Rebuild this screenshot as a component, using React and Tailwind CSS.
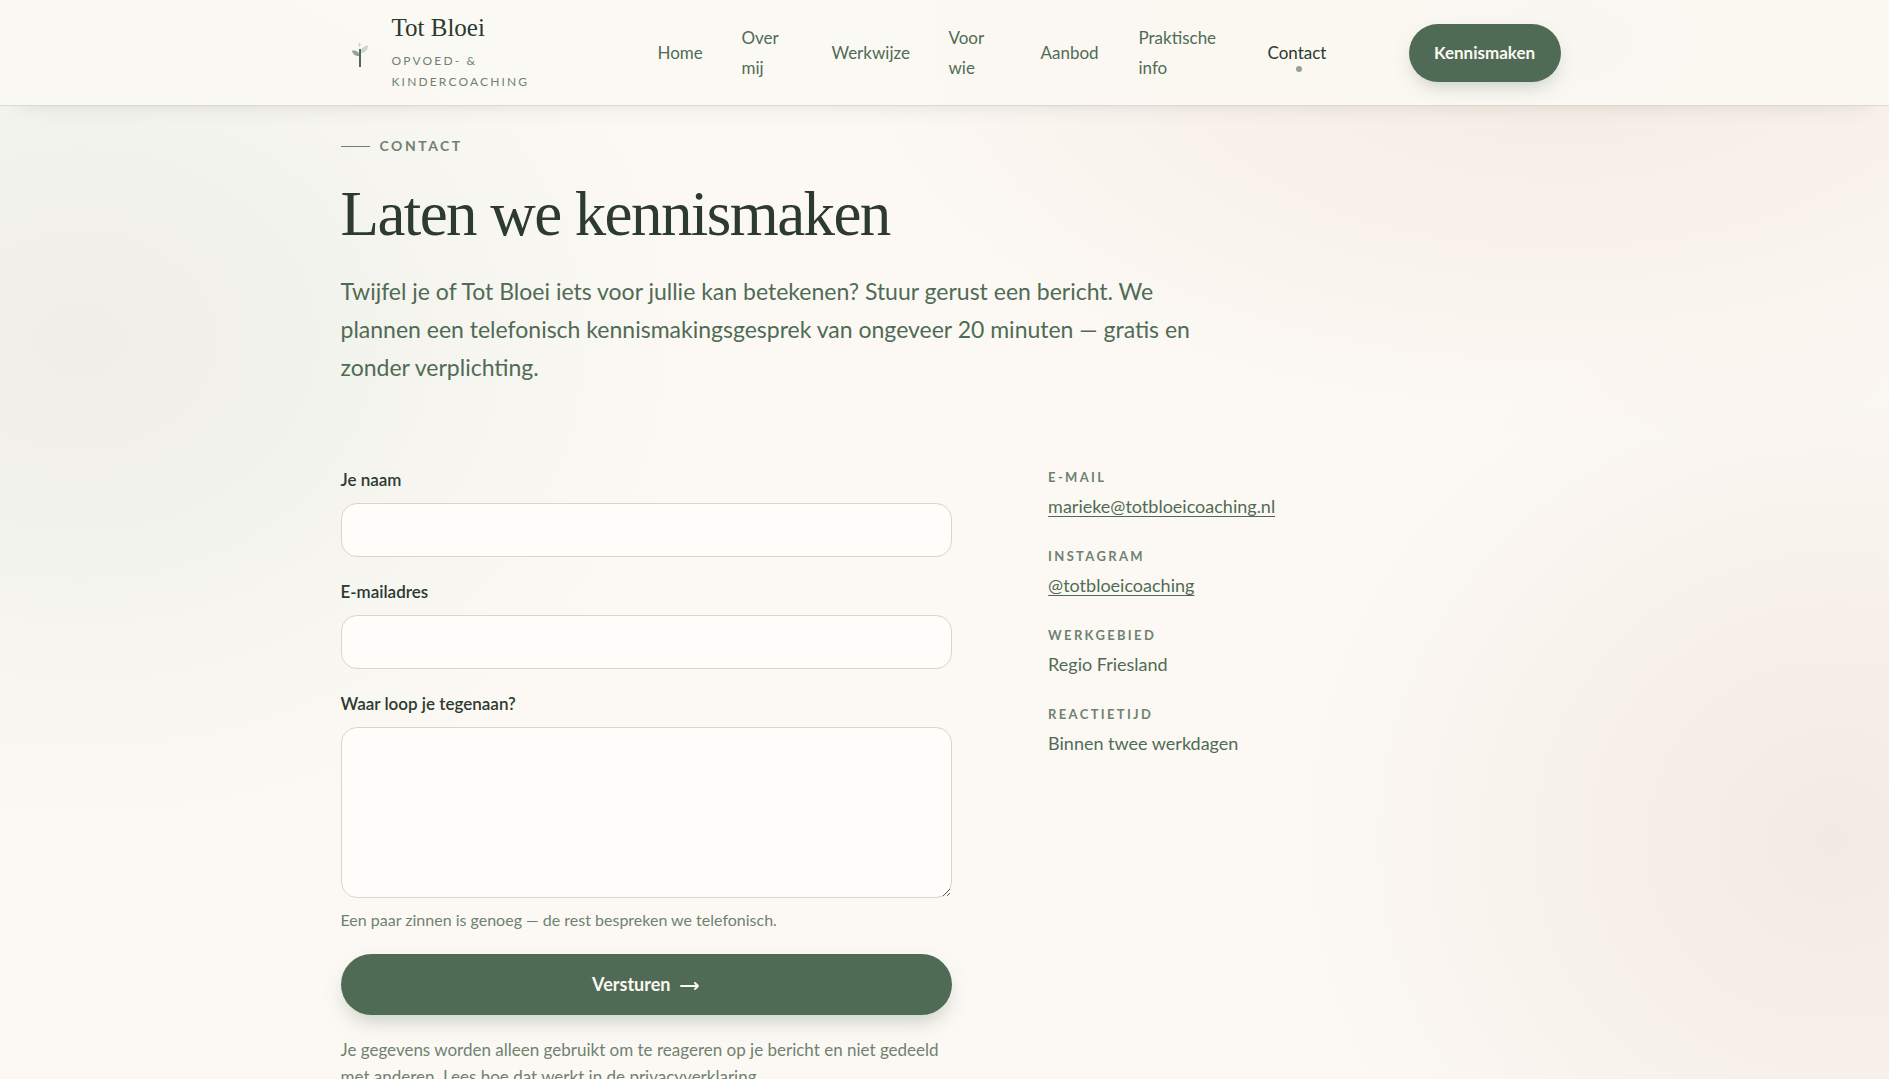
import React, { useState } from 'react';

const navItems = [
  { label: 'Home', href: '#home', width: 'w-[46px]' },
  { label: 'Over mij', href: '#over-mij', width: 'w-[52px]' },
  { label: 'Werkwijze', href: '#werkwijze', width: 'w-[79px]' },
  { label: 'Voor wie', href: '#voor-wie', width: 'w-[54px]' },
  { label: 'Aanbod', href: '#aanbod', width: 'w-[60px]' },
  { label: 'Praktische info', href: '#praktische-info', width: 'w-[91px]' },
  { label: 'Contact', href: '#contact', width: 'w-[62px]', active: true },
];

const details = [
  { label: 'E-mail', value: 'marieke@totbloeicoaching.nl', href: 'mailto:marieke@totbloeicoaching.nl' },
  { label: 'Instagram', value: '@totbloeicoaching', href: '#instagram' },
  { label: 'Werkgebied', value: 'Regio Friesland' },
  { label: 'Reactietijd', value: 'Binnen twee werkdagen' },
];

const fieldClass =
  'block w-full rounded-2xl border border-[#d5d6cd] bg-[#fefdf9] px-4 text-[17px] text-[#506b55] outline-none focus:border-[#506b55]';

const Sprout = () => (
  <svg viewBox="0 0 20 28" className="mt-1 h-7 w-5 shrink-0" fill="none" aria-hidden="true">
    <path d="M10 8v18" stroke="#506b55" strokeWidth="2" />
    <path d="M10 15C6 15.500 2.500 13.500 2 9.500c4-.5 7.500 1.500 8 5.500z" fill="#506b55" fillOpacity=".6" />
    <path d="M10.500 12C10.500 7.500 13.500 5 18 4.500c0 4.500-3 7.500-7.500 7.500z" fill="#506b55" fillOpacity=".25" />
    <path d="M9.500 6c-1.500-1.500-1.500-3 0-4.500 1.500 1.500 1.500 3 0 4.500z" fill="#506b55" fillOpacity=".25" />
  </svg>
);

const Header = () => (
  <header className="border-b border-[#dcdad0] bg-[#fbf8f3]/90 shadow-[0_12px_24px_-20px_rgba(80,107,85,0.35)]">
    <div className="mx-auto flex h-[105px] max-w-[1280px] items-center px-6">
      <a href="#home" className="flex w-[220px] items-center gap-[22px] pl-[21px]">
        <Sprout />
        <span className="flex flex-col pb-[3px]">
          <span className="font-['Liberation_Serif',serif] text-[25px] leading-9 text-[#2c3a30]">Tot Bloei</span>
          <span className="mt-1 text-[12px] leading-[21px] tracking-[0.18em] text-[#6f8271] uppercase">
            Opvoed- &amp; Kindercoaching
          </span>
        </span>
      </a>

      <nav className="ml-auto flex items-center gap-[38px] text-[17px] leading-[30px]">
        {navItems.map((item) => (
          <a
            key={item.label}
            href={item.href}
            className={`relative ${item.width} ${item.active ? 'text-[#2c3a30]' : 'text-[#506b55]'}`}
          >
            {item.label}
            {item.active && (
              <span className="absolute -bottom-1 left-1/2 size-1.5 -translate-x-1/2 rounded-full bg-[#93a295]" />
            )}
          </a>
        ))}
      </nav>

      <a
        href="#contact"
        className="ml-[79px] flex h-[58px] w-[152px] items-center justify-center rounded-full bg-[#506b55] text-[17px] font-bold text-[#fbf8f3] shadow-[0_8px_20px_-6px_rgba(80,107,85,0.35)]"
      >
        Kennismaken
      </a>
    </div>
  </header>
);

const Field = ({ id, label, children }) => (
  <div className="flex flex-col">
    <label htmlFor={id} className="mb-[9px] text-[17px] leading-7 font-semibold text-[#2c3a30]">
      {label}
    </label>
    {children}
  </div>
);

const ContactForm = () => {
  const [form, setForm] = useState({ name: '', email: '', message: '' });

  const handleChange = (e) => setForm({ ...form, [e.target.name]: e.target.value });

  return (
    <form onSubmit={(e) => e.preventDefault()} className="flex flex-col">
      <div className="flex flex-col gap-[21px]">
        <Field id="name" label="Je naam">
          <input id="name" name="name" type="text" value={form.name} onChange={handleChange} className={`${fieldClass} h-[54px]`} />
        </Field>
        <Field id="email" label="E-mailadres">
          <input id="email" name="email" type="email" value={form.email} onChange={handleChange} className={`${fieldClass} h-[54px]`} />
        </Field>
        <Field id="message" label="Waar loop je tegenaan?">
          <textarea
            id="message"
            name="message"
            value={form.message}
            onChange={handleChange}
            className={`${fieldClass} h-[171px] resize-y py-3`}
          />
        </Field>
      </div>
      <p className="mt-2 text-[16px] leading-[27px] text-[#6f8271]">
        Een paar zinnen is genoeg — de rest bespreken we telefonisch.
      </p>
      <button
        type="submit"
        className="mt-[21px] flex h-[61px] items-center justify-center gap-2.5 rounded-full bg-[#506b55] text-[18px] font-bold text-[#fbf8f3] shadow-[0_10px_22px_-6px_rgba(80,107,85,0.35)]"
      >
        Versturen
        <svg viewBox="0 0 20 12" className="h-3 w-5" fill="none" stroke="currentColor" strokeWidth="2" strokeLinecap="round" strokeLinejoin="round" aria-hidden="true">
          <path d="M1 7h17M15 4l3 3-3 3" />
        </svg>
      </button>
      <p className="mt-[21px] text-[17px] leading-[27px] text-[#6f8271]">
        Je gegevens worden alleen gebruikt om te reageren op je bericht en niet gedeeld met anderen. Lees hoe dat werkt in
        de <a href="#privacy">privacyverklaring</a>.
      </p>
    </form>
  );
};

const App = () => (
  <div className="h-screen overflow-hidden bg-[#fcf9f4] bg-[radial-gradient(ellipse_620px_500px_at_80px_340px,rgba(90,107,85,0.08),rgba(120,160,140,0.07)_40%,transparent),radial-gradient(ellipse_760px_400px_at_1560px_40px,rgba(205,145,125,0.14),transparent),radial-gradient(ellipse_560px_540px_at_97%_840px,rgba(190,140,125,0.14),transparent)] font-['Lato',sans-serif]">
    <Header />
    <main className="mx-auto max-w-[1280px] px-9 pt-[26px]">
      <p className="flex items-center gap-2.5 text-[14px] leading-7 font-bold tracking-[0.18em] text-[#6f8271] uppercase">
        <span className="h-px w-[29px] bg-[#6f8271]" />
        Contact
      </p>
      <h1 className="mt-4 font-['Liberation_Serif',serif] text-[63px] leading-[76px] tracking-tight text-[#2c3a30]">
        Laten we kennismaken
      </h1>
      <p className="mt-5 max-w-[860px] text-[23px] leading-[38px] text-[#506b55]">
        Twijfel je of Tot Bloei iets voor jullie kan betekenen? Stuur gerust een bericht. We plannen een telefonisch
        kennismakingsgesprek van ongeveer 20 minuten — gratis en zonder verplichting.
      </p>

      <div className="mt-20 grid grid-cols-[11fr_9fr] gap-24">
        <ContactForm />
        <dl className="flex flex-col gap-[23px]">
          {details.map((item) => (
            <div key={item.label}>
              <dt className="text-[13px] leading-[22px] font-bold tracking-[0.18em] text-[#6f8271] uppercase">{item.label}</dt>
              <dd className="mt-[3px] text-[18px] leading-[31px] text-[#506b55]">
                {item.href ? (
                  <a href={item.href} className="underline decoration-1 underline-offset-3">
                    {item.value}
                  </a>
                ) : (
                  item.value
                )}
              </dd>
            </div>
          ))}
        </dl>
      </div>
    </main>
  </div>
);

export default App;
